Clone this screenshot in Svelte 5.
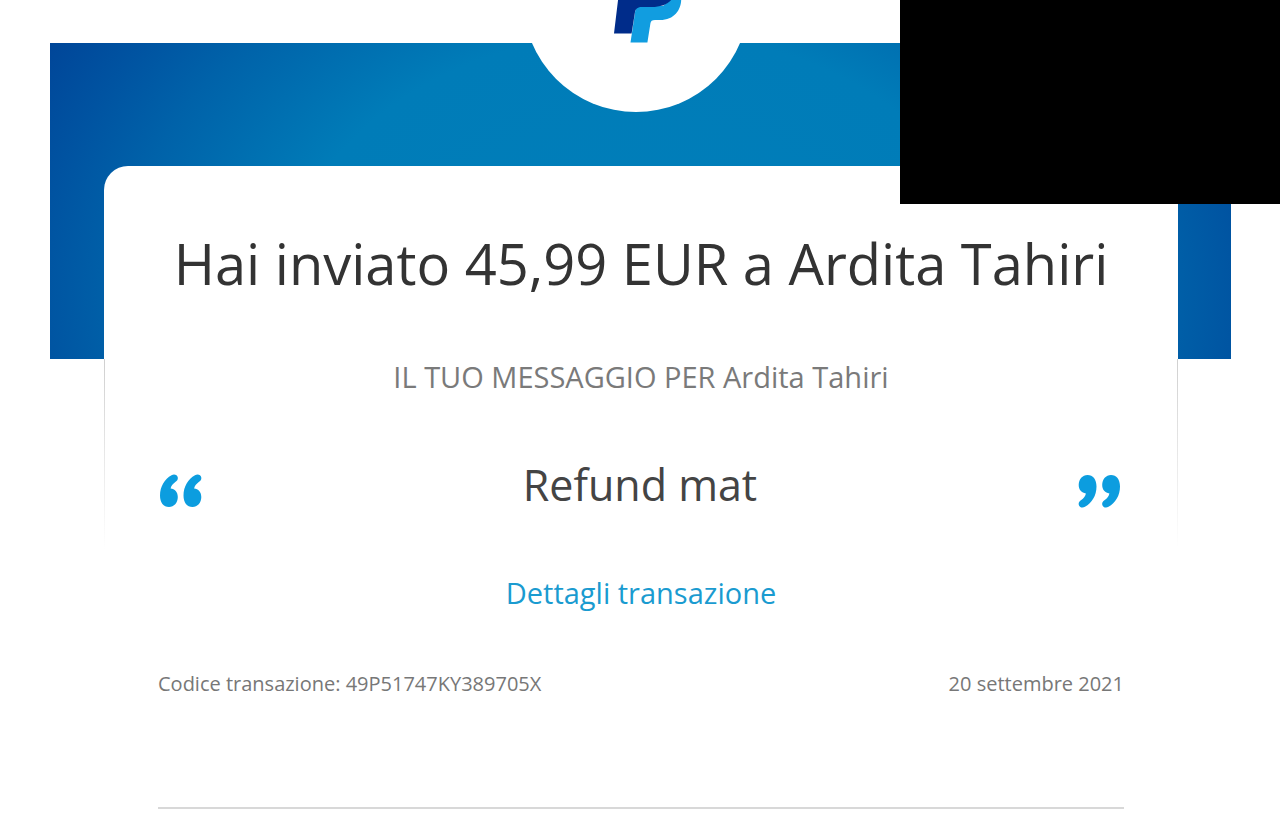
<script lang="ts">
	const payment = {
		title: "Hai inviato 45,99 EUR a Ardita Tahiri",
		recipient: "Ardita Tahiri",
		message: "Refund mat",
		code: "49P51747KY389705X",
		date: "20 settembre 2021"
	};

	const mark =
		"M11.5 1.2C14.2 -0.4 17.4 0.8 17.8 3.6C18 5.4 17.2 6.6 15.6 7.8C12.6 10 11 12 10.6 14.6C14.8 15 17.8 18.2 17.8 23C17.8 28.8 14 33 9 33C3.5 33 0 28.6 0 21.5C0 12.5 4.6 5 11.5 1.2Z";
</script>

{#snippet quote(closing: boolean)}
	<svg class="quote" class:closing viewBox="0 0 42 34" aria-hidden="true">
		<path d={mark} />
		<path d={mark} transform="translate(23.5 0)" />
	</svg>
{/snippet}

<div class="redaction"></div>

<main>
	<header>
		<div class="badge"></div>
		<svg class="logo" viewBox="0 0 70 43" role="img" aria-label="PayPal">
			<path
				fill="#119de0"
				d="M23 6H50L67 -8C71 4 65 20 47 20H42C39 20 37.8 21 37.4 23.5L34.4 42.5H17.5Z"
			/>
			<path fill="#002c8a" d="M6 -8H63C59 3 50 7 39 7H29C25 7 22.5 8.5 22 12L18.6 33.6H1Z" />
		</svg>
	</header>

	<section class="receipt">
		<div class="card">
			<h1>{payment.title}</h1>
			<p class="label">IL TUO MESSAGGIO PER {payment.recipient}</p>
			<blockquote>
				{@render quote(false)}
				<p>{payment.message}</p>
				{@render quote(true)}
			</blockquote>
			<a href="#dettagli">Dettagli transazione</a>
			<footer>
				<span>Codice transazione: {payment.code}</span>
				<time datetime="2021-09-20">{payment.date}</time>
			</footer>
		</div>
	</section>
</main>

<style>
	:global(body) {
		margin: 0;
		background: #fff;
		font-family: "Open Sans", "Noto Sans", sans-serif;
	}

	main {
		padding: 0 49px 0 50px;
		overflow: hidden;
	}

	header {
		position: relative;
		display: flex;
		justify-content: center;
		height: 43px;
	}

	.badge {
		position: absolute;
		left: calc(50% - 118px);
		bottom: -69px;
		width: 226px;
		height: 226px;
		border-radius: 50%;
		background: #fff;
	}

	.logo {
		position: relative;
		width: 70px;
		height: 43px;
		margin-left: 14px;
	}

	.receipt {
		padding: 123px 53px 0 54px;
		background: radial-gradient(
				ellipse 58% 161% at 50% 80%,
				#007fba 0%,
				#007cb8 52%,
				#0062a9 76%,
				#0053a1 88%,
				#004598 100%
			)
			no-repeat;
		background-size: 100% 316px;
	}

	.card {
		display: flex;
		flex-direction: column;
		align-items: center;
		padding: 59px 54px 0;
		border-radius: 24px 24px 0 0;
		background:
			linear-gradient(#d0d0d0, #fff) left 193px / 1px 190px no-repeat,
			linear-gradient(#d0d0d0, #fff) right 193px / 1px 190px no-repeat,
			#fff;
		color: #333;
	}

	h1 {
		margin: 0;
		font-size: 56px;
		font-weight: 400;
		line-height: 76px;
		white-space: nowrap;
	}

	.label {
		margin: 56px 0 0;
		color: #7a7a7a;
		font-size: 29px;
		line-height: 40px;
	}

	blockquote {
		display: flex;
		align-items: center;
		justify-content: space-between;
		align-self: stretch;
		margin: 56px 0 0;
		padding: 0 4px 0 2px;
	}

	blockquote p {
		margin: 0;
		color: #444;
		font-size: 43px;
		line-height: 64px;
	}

	.quote {
		width: 42px;
		height: 34px;
		padding-top: 12px;
		fill: #0c9ddf;
	}

	.closing {
		padding: 0 0 12px;
		transform: rotate(180deg);
	}

	a {
		margin-top: 56px;
		color: #1a9bd0;
		font-size: 29px;
		line-height: 40px;
		text-decoration: none;
	}

	footer {
		display: flex;
		justify-content: space-between;
		align-self: stretch;
		margin-top: 56px;
		padding: 0 0 108px;
		border-bottom: 2px solid #d8d8d8;
		color: #777;
		font-size: 20px;
		line-height: 30px;
	}

	/* covers the corner of the message */
	.redaction {
		position: absolute;
		z-index: 1;
		top: 0;
		right: 0;
		width: 380px;
		height: 204px;
		background: #000;
	}
</style>
